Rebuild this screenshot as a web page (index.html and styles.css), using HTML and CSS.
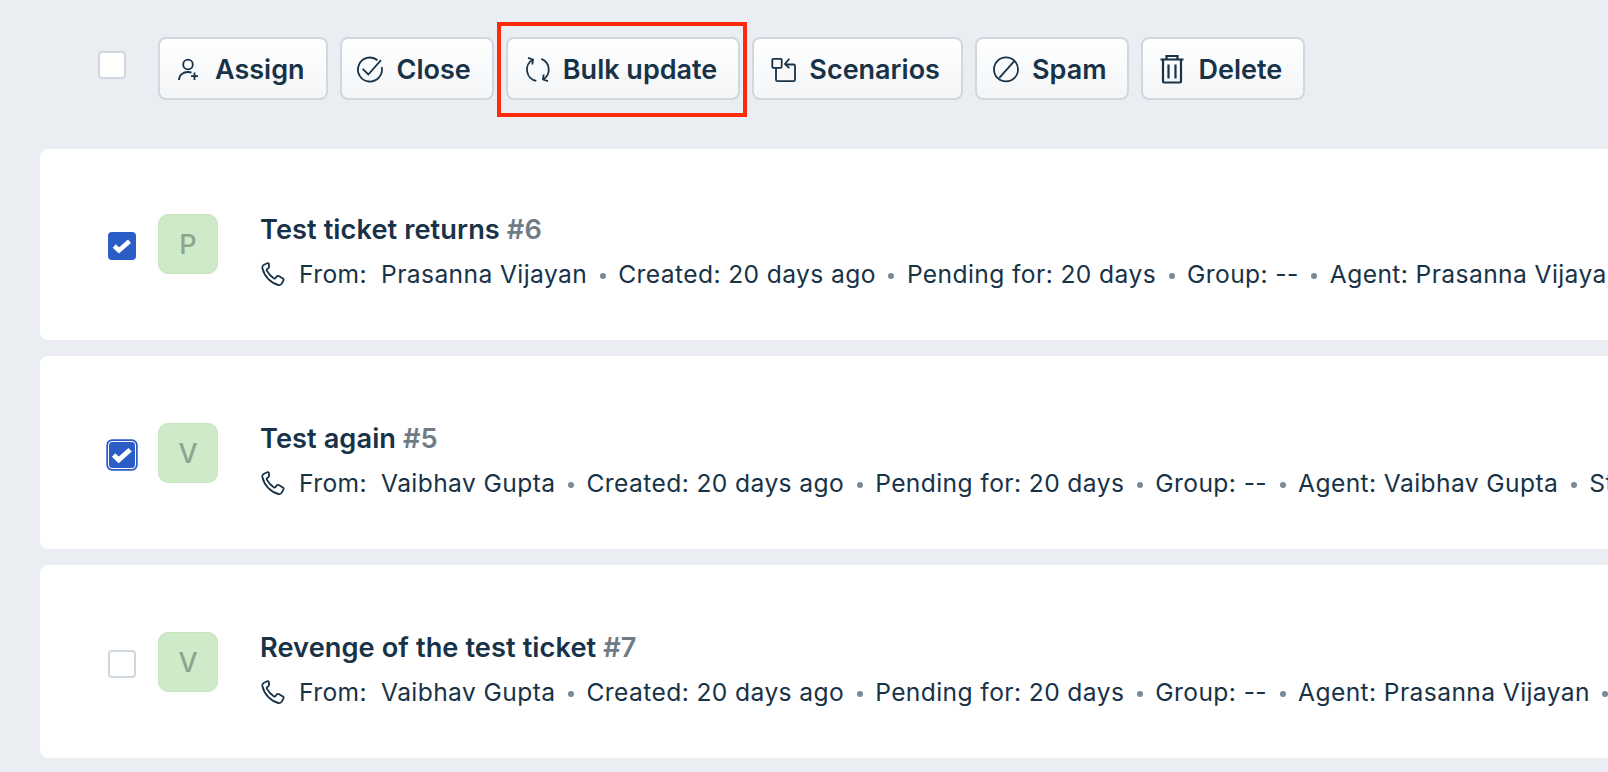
FILE: index.html
```html
<!DOCTYPE html>
<html lang="en">
<head>
<meta charset="utf-8">
<title>Tickets</title>
<link rel="stylesheet" href="styles.css">
</head>
<body>
<svg class="defs" width="0" height="0" aria-hidden="true">
  <symbol id="phone" viewBox="0 0 24 24"><path d="M6.200 1.300 3 2.700C1.600 3.400 1 4.600 1.400 6.200c1 4 3 7.800 6 11 3 3 6.400 5 10 5.800 1.600.3 2.800-.3 3.500-1.600l1.500-2.800c.4-.8.200-1.500-.5-2l-4.200-2.500c-.7-.4-1.400-.3-1.900.3l-1.400 1.800c-.4.400-.9.500-1.400.2-3.200-2-5.500-4.500-7.200-7.700-.3-.5-.2-1 .2-1.400l1.600-1.500c.5-.5.600-1.200.3-1.800L7.900 2c-.4-.8-1-1-1.700-.7Z"/></symbol>
</svg>
<main class="page">
  <div class="toolbar">
    <span class="check check-head"></span>
    <div class="actions">
      <button class="btn">
        <svg class="ico" viewBox="0 0 26 26"><circle cx="13" cy="9.500" r="4.800"/><path d="M4 25c0-5 4-8 9-8 1.300 0 2.500.2 3.500.6"/><path d="M19.500 17.500V25M16 21.200h7"/></svg>
        Assign
      </button>
      <button class="btn">
        <svg class="ico" viewBox="0 0 26 26"><path d="M24.700 12A12 12 0 1 1 20.500 5.200"/><path d="m5.700 13.800 5.600 5.700L24 5.200"/></svg>
        Close
      </button>
      <button class="btn">
        <svg class="ico" viewBox="0 0 26 26"><path d="M10 4.500A11.500 11.500 0 0 0 13.300 25.900"/><path d="M5 2.800 10 4.500 9.300 9.500"/><path d="M18.300 3.800A11.500 11.500 0 0 1 20 24.500"/><path d="M25 26.200 20 24.500 20.700 19.500"/></svg>
        Bulk update
      </button>
      <button class="btn">
        <svg class="ico" viewBox="0 0 26 26"><rect x="3.300" y="3.800" width="9.400" height="9" rx="1"/><path d="M7 12.800V24.700a1.500 1.500 0 0 0 1.500 1.500h16a1.500 1.500 0 0 0 1.500-1.500V11a1.500 1.500 0 0 0-1.500-1.500H16.500"/><path d="M20.300 3.800 16 9l4.300 4.200"/></svg>
        Scenarios
      </button>
      <button class="btn">
        <svg class="ico" viewBox="0 0 26 26"><circle cx="14" cy="14.400" r="12"/><path d="M7.300 22.800 22.300 6.200"/></svg>
        Spam
      </button>
      <button class="btn">
        <svg class="ico ico-heavy" viewBox="0 0 26 26"><path d="M2.500 4.500h23M8.500 4.500V1h11v3.500M5 4.500v22a1 1 0 0 0 1 1h16a1 1 0 0 0 1-1v-22M10.500 9.500v14M17.500 9.500v14"/></svg>
        Delete
      </button>
    </div>
    <span class="highlight"></span>
  </div>

  <article class="card card-first">
    <span class="check check-on"><svg viewBox="0 0 16 16"><path d="m2.800 8 3.200 3 7-6.200"/></svg></span>
    <div class="avatar">P</div>
    <div class="body">
      <h2 class="title">Test ticket returns <span class="num">#6</span></h2>
      <p class="meta"><svg class="phone"><use href="#phone"/></svg><span class="from">From:</span><span>Prasanna Vijayan</span><i class="dot"></i><span>Created: 20 days ago</span><i class="dot"></i><span>Pending for: 20 days</span><i class="dot"></i><span>Group: --</span><i class="dot"></i><span>Agent: Prasanna Vijayan</span></p>
    </div>
  </article>

  <article class="card">
    <span class="check check-on check-focus"><svg viewBox="0 0 16 16"><path d="m2.800 8 3.200 3 7-6.200"/></svg></span>
    <div class="avatar">V</div>
    <div class="body">
      <h2 class="title">Test again <span class="num">#5</span></h2>
      <p class="meta"><svg class="phone"><use href="#phone"/></svg><span class="from">From:</span><span>Vaibhav Gupta</span><i class="dot"></i><span>Created: 20 days ago</span><i class="dot"></i><span>Pending for: 20 days</span><i class="dot"></i><span>Group: --</span><i class="dot"></i><span>Agent: Vaibhav Gupta</span><i class="dot"></i><span>Status: Open</span></p>
    </div>
  </article>

  <article class="card">
    <span class="check"></span>
    <div class="avatar">V</div>
    <div class="body">
      <h2 class="title">Revenge of the test ticket <span class="num">#7</span></h2>
      <p class="meta"><svg class="phone"><use href="#phone"/></svg><span class="from">From:</span><span>Vaibhav Gupta</span><i class="dot"></i><span>Created: 20 days ago</span><i class="dot"></i><span>Pending for: 20 days</span><i class="dot"></i><span>Group: --</span><i class="dot"></i><span>Agent: Prasanna Vijayan</span><i class="dot"></i></p>
    </div>
  </article>
</main>
</body>
</html>
```
FILE: styles.css
```css
* { box-sizing: border-box; }
html, body { margin: 0; height: 100%; }
body {
  background: #eaeef2;
  color: #183247;
  font-family: Inter, "Liberation Sans", sans-serif;
  font-optical-sizing: none;
  overflow: hidden;
}
.defs { position: absolute; }
.page { padding-left: 40px; }
.toolbar {
  position: relative;
  display: flex;
  align-items: flex-start;
  height: 149px;
  padding: 37px 0 0 58px;
}
.actions { display: flex; gap: 12px; margin-left: 32px; }
.btn {
  display: flex;
  align-items: center;
  gap: 14px;
  height: 63px;
  padding: 1px 21px 0 15px;
  border: 2px solid #cfd7df;
  border-radius: 8px;
  background: linear-gradient(#ffffff, #f3f5f7);
  color: #183247;
  font: 600 27px Inter, "Liberation Sans", sans-serif;
  font-optical-sizing: none;
  white-space: nowrap;
}
.ico {
  width: 26px;
  height: 26px;
  margin-top: -2px;
  fill: none;
  stroke: #183247;
  stroke-width: 1.800;
  flex: none;
  overflow: visible;
}
.ico-heavy { stroke-width: 2.200; }
.highlight {
  position: absolute;
  left: 457px;
  top: 22px;
  width: 250px;
  height: 95px;
  border: 4px solid #ff2a0a;
}
.check {
  display: block;
  flex: none;
  width: 28px;
  height: 28px;
  background: #fff;
  border: 2px solid #cfd7df;
  border-radius: 4px;
}
.check svg {
  display: block;
  width: 100%;
  height: 100%;
  fill: none;
  stroke: #fff;
  stroke-width: 3;
}
.check-head { margin-top: 14px; }
.check-on { background: #2c5cc5; border-color: #2c5cc5; }
.check-focus { border: 1.500px solid #fff; box-shadow: 0 0 0 1.700px #2c5cc5; }
.card {
  display: flex;
  align-items: flex-start;
  height: 193px;
  margin-bottom: 16px;
  padding: 67px 0 0 68px;
  background: #fff;
  border-radius: 8px 0 0 8px;
  overflow: hidden;
}
.card .check { margin-top: 18px; }
.card-first { height: 191px; padding-top: 65px; }
.avatar {
  flex: none;
  display: flex;
  align-items: center;
  justify-content: center;
  width: 60px;
  height: 60px;
  margin-left: 22px;
  background: #cfeac8;
  border: 1px solid #c6e4be;
  border-radius: 10px;
  color: #8da58d;
  font-size: 27px;
  font-weight: 500;
}
.body { margin: 0 0 0 42px; min-width: 0; flex: 1; }
.title {
  margin: 0;
  font-size: 27.200px;
  font-weight: 600;
  line-height: 32px;
  letter-spacing: .08px;
  white-space: nowrap;
}
.num { color: #6f7c87; }
.meta {
  display: flex;
  align-items: center;
  margin: 12px 0 0;
  font-size: 24.600px;
  letter-spacing: .4px;
  line-height: 32px;
  white-space: nowrap;
}
.phone {
  flex: none;
  width: 24px;
  height: 24px;
  margin: 0 14px 0 1px;
  fill: none;
  stroke: #183247;
  stroke-width: 1.800;
}
.from { margin-right: 14px; }
.dot {
  flex: none;
  width: 6px;
  height: 6px;
  margin: 4px 12.500px 0;
  border-radius: 50%;
  background: #7b8a97;
}
```
